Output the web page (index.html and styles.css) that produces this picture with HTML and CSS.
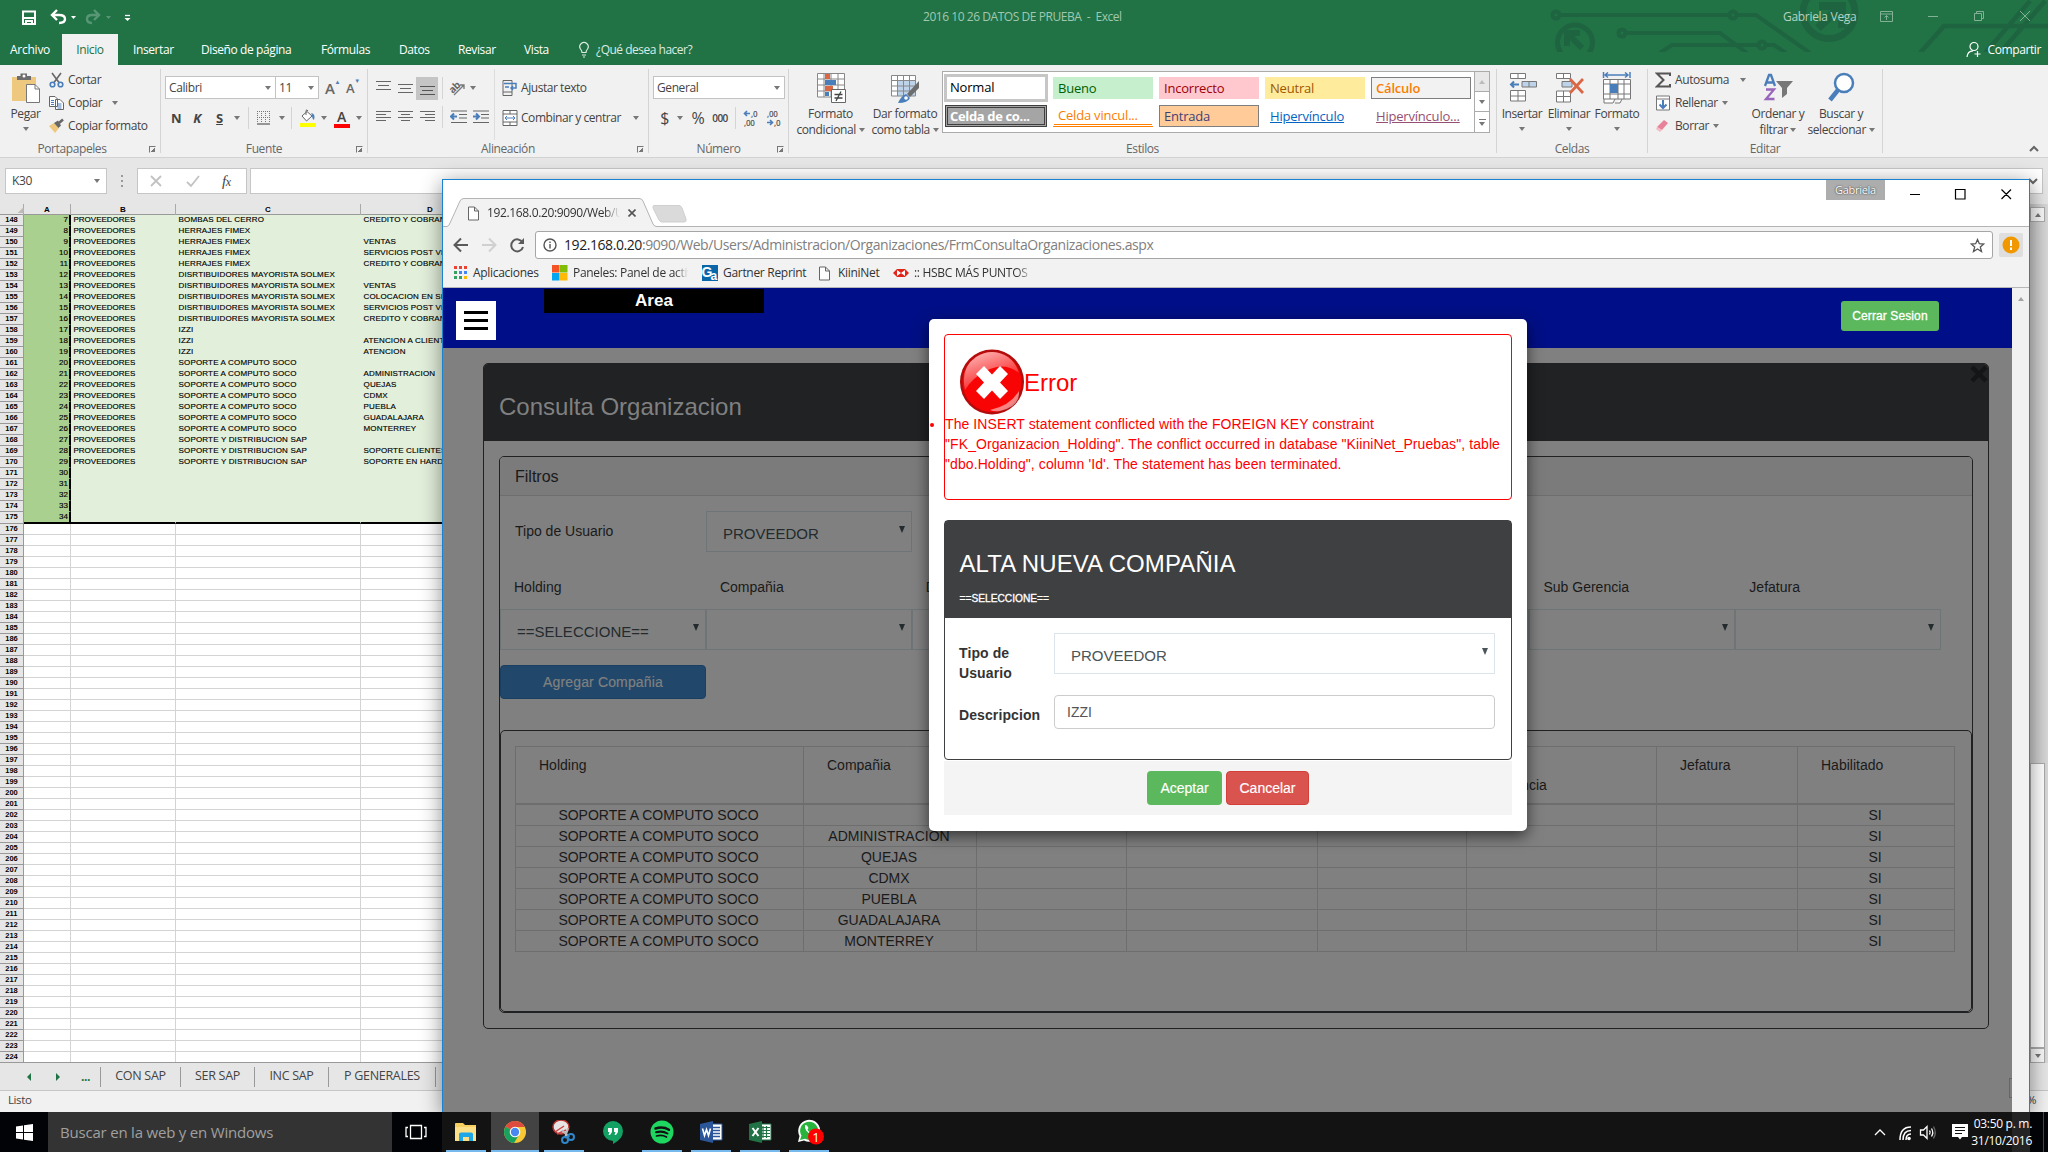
FILE: index.html
```html
<!DOCTYPE html>
<html lang="es">
<head>
<meta charset="utf-8">
<title>Escritorio</title>
<link rel="stylesheet" href="styles.css">
</head>
<body>
<div class="desktop">
<main class="excel">
  <header class="xl-title">
    <svg class="circuit" width="498" height="52" viewBox="1550 0 498 52" fill="none" stroke="#1e6440" stroke-width="4">
      <circle cx="1556" cy="15" r="3.5"/><path d="M1560 15H1729M1738 15H1756L1810 53"/><circle cx="1733" cy="15" r="3.5"/>
      <circle cx="1622" cy="33" r="3.5"/><path d="M1626 33H1720L1747 53M1660 53L1672 45H1758M1767 45H1774L1786 53"/><circle cx="1762" cy="45" r="3.5"/>
      <path d="M1561 53A17.500 17.500 0 1 1 1589 53" stroke-width="5"/><path d="M1567 46V33H1580M1568 34L1582 48" stroke-width="6"/>
      <path d="M1809 -4A26 26 0 1 0 1849 -4" stroke-width="7"/><path d="M1819 6H1842V28M1840 7L1818 28" stroke-width="8"/>
      <path d="M1920 53L1944 26H2048M1985 53L2030 1M2000 53L2045 1" stroke-width="4.500"/>
    </svg>
    <div class="quick">
      <svg width="150" height="32" viewBox="0 0 150 32" fill="none" stroke="#fff" stroke-width="2">
        <path d="M23 10.500H35V23H23ZM24 17H34M26 23V20H32V23"/>
        <path d="M53 14H59Q65 14 65 18Q65 22 59 22M57 9L52 14L57 19" stroke-width="2.400"/>
        <path d="M71 15H76L73.500 18Z" fill="#fff" stroke="none"/>
        <g opacity=".25"><path d="M98 14H92Q87 14 87 18Q87 22 92 22M94 9L99 14L94 19" stroke-width="2.400"/><path d="M106 15H111L108.500 18Z" fill="#fff" stroke="none"/></g>
        <path d="M125 14.500H130" stroke-width="1.300"/><path d="M124.500 17H130.500L127.500 20Z" fill="#fff" stroke="none"/>
      </svg>
    </div>
    <div class="doc-name">2016 10 26 DATOS DE PRUEBA&nbsp; -&nbsp; Excel</div>
    <div class="user">Gabriela Vega</div>
    <svg class="winbtns" width="168" height="32" viewBox="1880 0 168 32" fill="none" stroke="#82b195">
      <path d="M1880.500 10.500H1892.500V20.500H1880.500ZM1881 13H1892M1886.500 19V14.500M1884.500 16.500L1886.500 14.500L1888.500 16.500M1928 15.500H1938M1974.500 12.500H1981.500V19.500H1974.500ZM1976.500 12V10.500H1983.500V17.500H1982M2020 10L2030 20M2030 10L2020 20"/>
    </svg>
  </header>
  <nav class="xl-tabs">
    <span class="tab archivo">Archivo</span><span class="tab active">Inicio</span><span class="tab w-ins">Insertar</span><span class="tab w-dis">Diseño de página</span><span class="tab w-for">Fórmulas</span><span class="tab w-dat">Datos</span><span class="tab w-rev">Revisar</span><span class="tab w-vis">Vista</span>
    <svg width="14" height="18" viewBox="0 0 14 18" fill="none" stroke="#dcebe2" stroke-width="1.200"><path d="M5 11.500Q5 10 3.500 8A4.200 4.200 0 1 1 10.500 8Q9 10 9 11.500ZM5 14H9M6 16H8"/></svg>
    <span class="ask">¿Qué desea hacer?</span>
    <span class="share"><svg width="16" height="18" viewBox="0 0 16 18" fill="none" stroke="#fff" stroke-width="1.200"><circle cx="8" cy="5.500" r="4"/><path d="M1 16Q1.500 10 7 9.800M11.500 10V16M8.500 13H14.500"/></svg>Compartir</span>
  </nav>

  <section class="ribbon">
    <div class="group g-clip">
      <div class="body">
        <div class="big paste">
          <svg width="30" height="32" viewBox="0 0 30 32"><path d="M1 5H25V29H1Z" fill="#edc87e"/><path d="M6 8V4H9.500V1.500H16V4H20V8Z" fill="#6d6d6d"/><circle cx="13" cy="4" r="1.500" fill="#fff"/><path d="M15.500 12.500H24L28.500 17V30.500H15.500Z" fill="#fff" stroke="#777"/><path d="M24 12.500V17H28.500" fill="none" stroke="#777"/></svg>
          <span>Pegar</span><i class="dd"></i>
        </div>
        <div class="stack">
          <div class="cmd"><svg width="15" height="16" viewBox="0 0 15 16" fill="none" stroke-width="1.600"><path d="M3 1L10 10.500M12 1L5 10.500" stroke="#666"/><circle cx="3.500" cy="12.500" r="2.300" stroke="#4a7ebb"/><circle cx="11.500" cy="12.500" r="2.300" stroke="#4a7ebb"/></svg><span>Cortar</span></div>
          <div class="cmd"><svg width="15" height="16" viewBox="0 0 15 16" fill="#fff" stroke="#666"><path d="M.5 1.500H6L8.500 4V11.500H.5ZM6.500 4.500H11L14.500 8V14.500H6.500Z"/><path d="M2 5.500H5M2 7.500H5M2 9.500H5M8.500 9H12.500M8.500 11H12.500M8.500 13H12.500" stroke="#4a7ebb"/></svg><span>Copiar</span><i class="dd"></i></div>
          <div class="cmd"><svg width="15" height="16" viewBox="0 0 15 16"><path d="M0 8L5 5L10 10L6 15Z" fill="#edc87e"/><path d="M5 5L9 2.500L12 7.500L9.500 10Z" fill="#666"/><path d="M10 5L14 1.500" stroke="#666" stroke-width="2.500"/></svg><span>Copiar formato</span></div>
        </div>
      </div>
      <footer><span>Portapapeles</span><i class="launch"></i></footer>
    </div>
    <div class="group g-font">
      <div class="body col">
        <div class="row r-font1"><span class="combo">Calibri<i class="dd"></i></span><span class="combo size">11<i class="dd"></i></span><span class="gl">A<sup>▲</sup></span><span class="gl small">A<sup>▼</sup></span></div>
        <div class="row r-font2"><b>N</b><b><em>K</em></b><b><u>S</u></b><i class="dd"></i><i class="sep"></i>
          <svg width="14" height="14" viewBox="0 0 14 14" fill="none" stroke="#777"><path d="M.5 0V12M4.500 0V12M8.500 0V12M12.500 0V12M0 .5H13M0 6.500H13" stroke-dasharray="1 1"/><path d="M0 13H13" stroke-width="1.500"/></svg><i class="dd"></i><i class="sep"></i>
          <svg width="18" height="18" viewBox="0 0 18 18"><path d="M3 7L8 2.500L13 7L7.500 12Z" fill="#fff" stroke="#666"/><path d="M7 6V1.500Q8 0 9 2" fill="none" stroke="#666"/><path d="M12 4Q17 5 15 11Q13 10 13 6Z" fill="#4a7ebb"/><path d="M1 14H17V18H1Z" fill="#ff0"/></svg><i class="dd"></i>
          <span class="fc">A</span><i class="dd"></i></div>
      </div>
      <footer><span>Fuente</span><i class="launch"></i></footer>
    </div>
    <div class="group g-align">
      <div class="body">
        <div class="col aligns">
          <div class="row r-al">
            <svg width="15" height="14" viewBox="0 0 15 14" stroke="#666"><path d="M0 .5H15M2 4.500H13M0 8.500H15"/></svg>
            <svg width="15" height="14" viewBox="0 0 15 14" stroke="#666"><path d="M0 3.500H15M2 7.500H13M0 11.500H15"/></svg>
            <span class="on"><svg width="15" height="14" viewBox="0 0 15 14" stroke="#555"><path d="M0 5.500H15M2 9.500H13M0 13.500H15"/></svg></span>
            <i class="sep"></i>
            <svg width="18" height="18" viewBox="0 0 18 18"><g transform="rotate(-45 8 8)"><text x="0" y="10" font-size="10" font-weight="bold" fill="#666">ab</text></g><path d="M5 16L15 6M11 6H15V10" fill="none" stroke="#777" stroke-width="1.300"/></svg><i class="dd orient"></i>
          </div>
          <div class="row r-al">
            <svg width="15" height="12" viewBox="0 0 15 12" stroke="#666"><path d="M0 .5H15M0 3.500H10M0 6.500H15M0 9.500H10"/></svg>
            <svg width="15" height="12" viewBox="0 0 15 12" stroke="#666"><path d="M0 .5H15M3 3.500H12M0 6.500H15M3 9.500H12"/></svg>
            <svg width="15" height="12" viewBox="0 0 15 12" stroke="#666"><path d="M0 .5H15M5 3.500H15M0 6.500H15M5 9.500H15"/></svg>
            <i class="sep"></i>
            <svg width="17" height="14" viewBox="0 0 17 14" stroke="#666" fill="none"><path d="M1 1H17M9 4.500H17M9 8H17M1 12.500H17"/><path d="M7 6.500H1M4 3.500L1 6.500L4 9.500" stroke="#4a7ebb" stroke-width="2"/></svg>
            <svg width="17" height="14" viewBox="0 0 17 14" stroke="#666" fill="none"><path d="M1 1H17M9 4.500H17M9 8H17M1 12.500H17"/><path d="M1 6.500H7M4 3.500L7 6.500L4 9.500" stroke="#4a7ebb" stroke-width="2"/></svg>
          </div>
        </div>
        <div class="col wraps">
          <div class="row"><svg width="16" height="16" viewBox="0 0 16 16" fill="none" stroke="#666"><path d="M1 .5H10V15.500H1ZM1 12H10"/><path d="M2 3.500H14V8H9M11 6L9 8L11 10M3 7H7" stroke="#4a7ebb" stroke-width="1.500"/></svg><span>Ajustar texto</span></div>
          <div class="row"><svg width="16" height="16" viewBox="0 0 16 16" fill="#fff" stroke="#666"><path d="M1 .5H15V15.500H1ZM1 4H15M1 12H15M8 .5V4M8 12V15.500"/><path d="M3 8H13M5 6L3 8L5 10M11 6L13 8L11 10" stroke="#4a7ebb" fill="none"/></svg><span>Combinar y centrar</span><i class="dd"></i></div>
        </div>
      </div>
      <footer><span>Alineación</span><i class="launch"></i></footer>
    </div>
    <div class="group g-num">
      <div class="body col">
        <div class="row"><span class="combo">General<i class="dd"></i></span></div>
        <div class="row r-num"><span class="sym">$</span><i class="dd"></i><span class="sym">%</span><span class="zer">000</span><i class="sep"></i>
          <svg class="dec" width="15" height="18" viewBox="0 0 15 18"><path d="M7 4.500H1.500M4 2L1.500 4.500L4 7" fill="none" stroke="#4a7ebb" stroke-width="1.600"/><text x="8" y="8">,0</text><text x="1" y="17">,00</text></svg>
          <svg class="dec" width="15" height="18" viewBox="0 0 15 18"><path d="M1 13.500H6.500M4 11L6.500 13.500L4 16" fill="none" stroke="#4a7ebb" stroke-width="1.600"/><text x="1" y="8">,00</text><text x="8" y="17">,0</text></svg></div>
      </div>
      <footer><span>Número</span><i class="launch"></i></footer>
    </div>
    <div class="group g-style">
      <div class="body">
        <div class="big"><svg width="30" height="32" viewBox="0 0 30 32"><path d="M1.500 1.500H28.500V25H1.500ZM1.500 7H28M1.500 13H28M1.500 19H28M8 1V25M15 1V25M22 1V25" fill="#fff" stroke="#888"/><path d="M9 2H14V7H9ZM9 14H17V19H9Z" fill="#da6644"/><path d="M9 8H20V13H9ZM9 20H13V24H9Z" fill="#4a7ebb"/><path d="M15.500 17.500H29.500V30.500H15.500Z" fill="#fff" stroke="#666"/><path d="M18.500 22.500H26.500M18.500 26H26.500M25 19.500L20 29" stroke="#444" stroke-width="1.300"/></svg><span>Formato</span><span>condicional <i class="dd"></i></span></div>
        <div class="big"><svg width="30" height="32" viewBox="0 0 30 32"><path d="M1.500 3.500H25.500V24H1.500Z" fill="#fff"/><path d="M8 9H25V24H8Z" fill="#bdd3ea"/><path d="M1.500 3.500H25.500V24H1.500ZM1.500 8.500H25M1.500 14H25M1.500 19H25M7.500 3V24M13.500 3V24M19.500 3V24" fill="none" stroke="#888"/><path d="M29 9V16L20 25L17 22Z" fill="#6d6d6d"/><path d="M8 31Q11 24 16 22L20 26Q18 31 8 31Z" fill="#4a7ebb"/><circle cx="16" cy="26" r="1.800" fill="#fff"/></svg><span>Dar formato</span><span>como tabla <i class="dd"></i></span></div>
        <div class="gallery">
          <div class="cells"><span class="s-normal">Normal</span><span class="s-good">Bueno</span><span class="s-bad">Incorrecto</span><span class="s-neutral">Neutral</span><span class="s-calc">Cálculo</span><span class="s-check">Celda de co...</span><span class="s-linked">Celda vincul...</span><span class="s-input">Entrada</span><span class="s-link">Hipervínculo</span><span class="s-vlink">Hipervínculo...</span></div>
          <div class="gscroll"><span><i class="dd up"></i></span><span><i class="dd"></i></span><span><i class="bar"></i><i class="dd"></i></span></div>
        </div>
      </div>
      <footer><span>Estilos</span></footer>
    </div>
    <div class="group g-cell">
      <div class="body">
        <div class="big"><svg width="30" height="32" viewBox="0 0 30 32" fill="#fff" stroke="#777"><path d="M3.500 1.500H18.500V6.500H3.500ZM11 1.500V6.500M3.500 18.500H18.500V29H3.500ZM11 18.500V29M3.500 24H18.500"/><path d="M15 9.500H29.500V15H15ZM22 9.500V15" fill="#bdd3ea"/><path d="M12 12.500H4M7 9.500L4 12.500L7 15.500" stroke="#4a7ebb" stroke-width="2" fill="none"/></svg><span>Insertar</span><i class="dd"></i></div>
        <div class="big"><svg width="30" height="32" viewBox="0 0 30 32" fill="#fff" stroke="#777"><path d="M2.500 1.500H16.500V6.500H2.500ZM9.500 1.500V6.500M2.500 19H16.500V30H2.500ZM9.500 19V30M2.500 24.500H16.500"/><path d="M8 9.500H18V15H8Z" fill="#bdd3ea"/><path d="M16 7L29 21M29 7L16 21" stroke="#da6644" stroke-width="2.800"/></svg><span>Eliminar</span><i class="dd"></i></div>
        <div class="big"><svg width="30" height="32" viewBox="0 0 30 32" fill="#fff" stroke="#777"><path d="M1.500 7.500H28.500V27H1.500ZM1.500 12H28M1.500 22H28M8 7.500V27M16 7.500V27M22 7.500V27M2 27V31H11L13 27M13 31H18L20 27"/><path d="M8 12H16V21H8Z" fill="#4a7ebb" stroke="none"/><path d="M3 3H26M6 .5L3 3L6 5.500M23 .5L26 3L23 5.500M1.500 0V6M28 0V6" stroke="#4a7ebb" stroke-width="1.500" fill="none"/></svg><span>Formato</span><i class="dd"></i></div>
      </div>
      <footer><span>Celdas</span></footer>
    </div>
    <div class="group g-edit">
      <div class="body">
        <div class="stack">
          <div class="cmd"><svg width="16" height="16" viewBox="0 0 16 16" fill="none" stroke="#555" stroke-width="2"><path d="M15 4V1.500H2L8.500 8L2 14.500H15V12"/></svg><span>Autosuma</span><i class="dd"></i></div>
          <div class="cmd"><svg width="16" height="16" viewBox="0 0 16 16" fill="#fff" stroke="#777"><path d="M1.500 1H14.500V15H1.500ZM1.500 4H14.500"/><path d="M8 5V13M4.500 9.500L8 13L11.500 9.500" stroke="#4a7ebb" stroke-width="2" fill="none"/></svg><span>Rellenar</span><i class="dd"></i></div>
          <div class="cmd"><svg width="16" height="16" viewBox="0 0 16 16"><path d="M2 9L9 2L13 5L7 12Z" fill="#e8829a"/><path d="M2 9L7 12L5 14L1 11Z" fill="#f4bac6"/></svg><span>Borrar</span><i class="dd"></i></div>
        </div>
        <div class="big"><svg width="30" height="32" viewBox="0 0 30 32"><path d="M2 14L6 3H8L12 14M4 10.500H10" fill="none" stroke="#4a7ebb" stroke-width="2.300"/><path d="M3 17.500H11L3 27H11.500" fill="none" stroke="#9966bb" stroke-width="2.300"/><path d="M13 9H30L24 16V22L19 26V16Z" fill="#777"/></svg><span>Ordenar y</span><span>filtrar <i class="dd"></i></span></div>
        <div class="big"><svg width="30" height="32" viewBox="0 0 30 32"><circle cx="18" cy="11" r="9" fill="#fff" stroke="#4a7ebb" stroke-width="2.500"/><path d="M12 18L4 28" stroke="#4a7ebb" stroke-width="4.500"/></svg><span>Buscar y</span><span>seleccionar <i class="dd"></i></span></div>
      </div>
      <footer><span>Editar</span></footer>
    </div>
    <svg class="collapse" width="12" height="8" viewBox="0 0 12 8" fill="none" stroke="#666" stroke-width="2"><path d="M2 6L6 2L10 6"/></svg>
  </section>

  <section class="formula">
    <div class="namebox">K30<i class="dd"></i></div>
    <div class="dots"></div>
    <div class="fxbox"><svg width="108" height="24" viewBox="0 0 108 24" fill="none" stroke="#c2c2c2" stroke-width="1.800"><path d="M13 7L23 17M23 7L13 17M49 13L53 17L61 7"/></svg><em>f<small>x</small></em></div>
    <div class="finput"><svg width="10" height="8" viewBox="0 0 10 8" fill="none" stroke="#666" stroke-width="2"><path d="M1 2L5 6L9 2"/></svg></div>
  </section>

  <section class="sheet">
    <div class="grid" id="grid">
      <div class="hrow"><span class="corner">◢</span><span>A</span><span>B</span><span>C</span><span>D</span></div>
    </div>
    <div class="vscroll"><i class="btn"><i class="dd up"></i></i><i class="thumb"></i><i class="btn"><i class="dd"></i></i></div>
  </section>
  <div class="sheettabs"><i class="arr left"></i><i class="arr right"></i><b>...</b><span class="t1">CON SAP</span><span class="t2">SER SAP</span><span class="t3">INC SAP</span><span class="t4">P GENERALES</span></div>
  <div class="status"><span>Listo</span><span>%</span></div>
</main>

<section class="chrome">
  <div class="strip">
    <svg class="tabshape" width="250" height="30" viewBox="443 197 250 30"><path d="M443 226.500H447Q449 226 450 223L460 201Q461 198.500 464 198.500H607Q610 198.500 611 201L621 224Q622 226.500 625 226.500V228H443Z" fill="#f2f2f2"/><path d="M443 226.500H447Q449 226 450 223L460 201Q461 198.500 464 198.500H639Q642 198.500 643 201L653 224Q654 226.500 657 226.500V228H443Z" fill="#f2f2f2"/><path d="M443 226.500H447Q449 226 450 223L460 201Q461 198.500 464 198.500H639Q642 198.500 643 201L653 224Q654 226.500 657 226.500H693" fill="none" stroke="#b4b4b4"/><path d="M654 205.500H679Q681 205.500 682 208L686 219Q687 222 684 222H662Q660 222 659 220L653 208Q652.500 205.500 654 205.500Z" fill="#dadada" stroke="#cfcfcf"/></svg>
    <div class="tabtext"><svg width="11" height="15" viewBox="0 0 11 15" fill="#fff" stroke="#666"><path d="M.5 1H6.500L10.500 5V14H.5ZM6.500 1V5H10.500"/></svg><span>192.168.0.20:9090/Web/U</span><svg width="8" height="8" viewBox="0 0 8 8" stroke="#555" stroke-width="1.600"><path d="M.5 .5L7.500 7.500M7.500 .5L.5 7.500"/></svg></div>
    <span class="profile">Gabriela</span>
    <svg class="cbtns" width="110" height="28" viewBox="1910 180 110 28" fill="none" stroke="#000" stroke-width="1.200"><path d="M1910 194.500H1920M1955.500 189.500H1965V199H1955.500ZM2001.500 189.500L2011 199M2011 189.500L2001.500 199"/></svg>
  </div>
  <div class="toolbar">
    <svg width="80" height="28" viewBox="450 231 80 28" fill="none" stroke="#5a5a5a" stroke-width="2"><path d="M468 245H455M461 238.500L454.500 245L461 251.500"/><path d="M482 245H495M489 238.500L495.500 245L489 251.500" stroke="#d0d0d0"/><path d="M522.500 242.500A6 6 0 1 0 523 247"/><path d="M524 238V244H518Z" fill="#5a5a5a" stroke="none"/></svg>
    <div class="omni"><svg width="14" height="14" viewBox="0 0 14 14" fill="none" stroke="#555" stroke-width="1.400"><circle cx="7" cy="7" r="6"/><path d="M7 6V10.500M7 3.500V5"/></svg><span><b>192.168.0.20</b>:9090/Web/Users/Administracion/Organizaciones/FrmConsultaOrganizaciones.aspx</span><svg class="star" width="15" height="15" viewBox="0 0 15 15" fill="none" stroke="#555" stroke-width="1.300"><path d="M7.500 1.500L9.300 5.700L13.800 6L10.300 9L11.500 13.500L7.500 11L3.500 13.500L4.700 9L1.200 6L5.700 5.700Z"/></svg></div>
    <div class="warn"><svg width="18" height="18" viewBox="0 0 18 18"><circle cx="9" cy="9" r="8.500" fill="#f19700"/><path d="M9 4V10M9 11.500V14" stroke="#fff" stroke-width="2"/></svg></div>
  </div>
  <div class="bookmarks">
    <svg class="apps" width="14" height="14" viewBox="0 0 14 14"><path d="M0 0h3v3H0zM5 0h3v3H5zM10 0h3v3h-3z" fill="#ea4335"/><path d="M0 5h3v3H0zM0 10h3v3H0zM5 10h3v3H5z" fill="#34a160"/><path d="M5 5h3v3H5zM10 5h3v3h-3z" fill="#4285f4"/><path d="M10 10h3v3h-3z" fill="#fbbc05"/></svg><span class="b1">Aplicaciones</span>
    <svg width="16" height="16" viewBox="0 0 16 16"><path d="M0 0h7.500v7.500H0z" fill="#f35325"/><path d="M8 0h7.500v7.500H8z" fill="#81bc06"/><path d="M0 8h7.500v7.500H0z" fill="#05a6f0"/><path d="M8 8h7.500v7.500H8z" fill="#ffba08"/></svg><span class="b2">Paneles: Panel de activ</span>
    <svg width="16" height="16" viewBox="0 0 16 16"><path d="M0 0H16V16H0Z" fill="#0967a9"/><text x="-.5" y="12" font-family="Liberation Sans" font-weight="bold" font-size="14" fill="#fff">G</text><text x="8.500" y="15" font-family="Liberation Sans" font-weight="bold" font-size="12" fill="#fff">a</text></svg><span class="b3">Gartner Reprint</span>
    <svg width="11" height="15" viewBox="0 0 11 15" fill="#fff" stroke="#666"><path d="M.5 1H6.500L10.500 5V14H.5ZM6.500 1V5H10.500"/></svg><span class="b4">KiiniNet</span>
    <svg width="16" height="10" viewBox="0 0 16 10"><path d="M0 5L4 1H12L16 5L12 9H4Z" fill="#e1251b"/><path d="M4 2L8 5L12 2V8L8 5L4 8Z" fill="#fff"/><path d="M6 1L8 3.500L10 1ZM6 9L8 6.500L10 9Z" fill="#e1251b"/></svg><span class="b5">:: HSBC MÁS PUNTOS</span>
  </div>
  <div class="viewport">
    <div class="page">
      <div class="navy"><div class="burger"><i></i><i></i><i></i></div><div class="area">Area</div><span class="logout">Cerrar Sesion</span></div>
      <div class="panel">
        <div class="phead"><span>Consulta Organizacion</span><svg width="18" height="20" viewBox="0 0 18 20" fill="none" stroke="#141516" stroke-width="4.500"><path d="M2 3L16 17M16 3L2 17"/></svg></div>
        <div class="inner">
          <div class="fhead">Filtros</div>
          <div class="filters">
            <div class="frow"><label>Tipo de Usuario</label><span class="sel">PROVEEDOR<i></i></span></div>
            <div class="labels"><label>Holding</label><label>Compañia</label><label>Direccion</label><label>Sub Direccion</label><label>Gerencia</label><label>Sub Gerencia</label><label>Jefatura</label></div>
            <div class="sels"><span class="sel">==SELECCIONE==<i></i></span><span class="sel"><i></i></span><span class="sel"><i></i></span><span class="sel"><i></i></span><span class="sel"><i></i></span><span class="sel"><i></i></span><span class="sel"><i></i></span></div>
            <span class="add">Agregar Compañia</span>
          </div>
          <div class="results"><table><colgroup><col class="c1"><col class="c2"><col class="c3"><col class="c4"><col class="c5"><col class="c6"><col class="c7"><col class="c8"></colgroup>
            <thead><tr><th>Holding</th><th>Compañia</th><th>Direccion</th><th>Sub Direccion</th><th>Gerencia</th><th>Sub<br>Gerencia</th><th>Jefatura</th><th>Habilitado</th></tr></thead>
            <tbody id="orgs"></tbody></table></div>
        </div>
      </div>
      <i class="ghost"></i>
    </div>
    <div class="cscroll"><i class="dd up"></i></div>
  </div>
  <div class="modal">
    <div class="error">
      <div class="etitle"><svg width="64" height="66" viewBox="0 0 64 66"><defs><linearGradient id="gloss" x1="0" y1="0" x2="0.500" y2="1"><stop offset="0" stop-color="#fff" stop-opacity=".95"/><stop offset="1" stop-color="#fff" stop-opacity=".1"/></linearGradient></defs><ellipse cx="32" cy="33" rx="32" ry="32.500" fill="#b30c0c"/><ellipse cx="32" cy="33" rx="29.500" ry="30" fill="#f80404"/><path d="M5 41Q0 19 16 8Q32 -2 48 8Q56 14 59 24Q44 12 26 22Q12 29 5 41Z" fill="url(#gloss)" opacity=".8"/><path d="M30 61Q50 57 59 42Q60 58 40 62Q34 63 30 61Z" fill="#fff" opacity=".5"/><path d="M24 17L32 25.500L40 17L48 25L40 33.500L48 42L40 50L32 41.500L24 50L16 42L24 33.500L16 25Z" fill="#fff"/></svg><span>Error</span></div>
      <ul><li>The INSERT statement conflicted with the FOREIGN KEY constraint<br>"FK_Organizacion_Holding". The conflict occurred in database "KiiniNet_Pruebas", table<br>"dbo.Holding", column 'Id'. The statement has been terminated.</li></ul>
    </div>
    <div class="form">
      <div class="mhead"><h3>ALTA NUEVA COMPAÑIA</h3><small>==SELECCIONE==</small></div>
      <div class="fields"><div class="field f1"><label>Tipo de<br>Usuario</label><span class="msel">PROVEEDOR<i></i></span></div><div class="field f2"><label>Descripcion</label><span class="minput">IZZI</span></div></div>
    </div>
    <div class="mfoot"><span class="ok">Aceptar</span><span class="cancel">Cancelar</span></div>
  </div>
</section>

<footer class="taskbar">
  <div class="start"><svg width="17" height="17" viewBox="0 0 17 17" fill="#fff"><path d="M0 2.500L7 1.500V8H0ZM8 1.300L17 0V8H8ZM0 9H7V15.500L0 14.500ZM8 9H17V17L8 15.700Z"/></svg></div>
  <div class="search">Buscar en la web y en Windows</div>
  <div class="tview"><svg width="22" height="16" viewBox="0 0 22 16" fill="none" stroke="#fff" stroke-width="1.300"><path d="M5.500 1.500H16.500V14.500H5.500ZM3 3.500H1V12.500H3M19 3.500H21V12.500H19"/></svg></div>
  <div class="apps-row">
    <span class="run"><svg width="24" height="24" viewBox="0 0 24 24"><path d="M1 4Q1 3 2 3H9L11 5H22V21H1Z" fill="#f7cf5f"/><path d="M1 7H22V21H1Z" fill="#fce088"/><path d="M5 21V14Q5 12.500 7 12.500H17Q19 12.500 19 14V21H15V17H9V21Z" fill="#1da6e8"/></svg></span>
    <span class="run cur"><svg width="24" height="24" viewBox="0 0 24 24"><circle cx="12" cy="12" r="11" fill="#f7c934"/><path d="M12 12L2.500 6.500A11 11 0 0 0 11 23L16 15Z" fill="#19a15f"/><path d="M12 12L2.500 6.500A11 11 0 0 1 21.700 7H12Z" fill="#dd4b3e"/><circle cx="12" cy="12" r="5.300" fill="#fff"/><circle cx="12" cy="12" r="4.200" fill="#4888ef"/></svg></span>
    <span class="run"><svg width="24" height="24" viewBox="0 0 24 24"><ellipse cx="9" cy="7" rx="8" ry="7" fill="#e9e4e4" stroke="#b9322c" stroke-width="1.500"/><path d="M3 12L12 6M5 14L14 10" stroke="#c44" stroke-width="1.500"/><path d="M10 10L17 17M16 8L13 18" stroke="#bbb" stroke-width="2"/><circle cx="19" cy="17" r="3" fill="none" stroke="#2f86c9" stroke-width="2"/><circle cx="13" cy="20" r="3" fill="none" stroke="#2f86c9" stroke-width="2"/></svg></span>
    <span><svg width="24" height="24" viewBox="0 0 24 24"><path d="M12 1A10 10 0 0 1 22 11Q22 19 12 24V21A10 10 0 0 1 12 1Z" fill="#12a063"/><path d="M7 8H11V12L9 15H7.500L8.500 12H7ZM13 8H17V12L15 15H13.500L14.500 12H13Z" fill="#fff"/></svg></span>
    <span class="run"><svg width="24" height="24" viewBox="0 0 24 24" fill="none" stroke="#111" stroke-linecap="round"><circle cx="12" cy="12" r="11.500" fill="#1ed760" stroke="none"/><path d="M5.500 8.500Q13 6 19 9.800" stroke-width="2.400"/><path d="M6 12.300Q12.500 10.500 17.500 13.500" stroke-width="2"/><path d="M6.500 16Q12 14.500 16.500 17" stroke-width="1.700"/></svg></span>
    <span class="run"><svg width="24" height="24" viewBox="0 0 24 24"><path d="M11 4H23V20H11Z" fill="#fff" stroke="#2b579a"/><path d="M14 7.500H21M14 10.500H21M14 13.500H21M14 16.500H21" stroke="#2b579a" stroke-width="1.300"/><path d="M1 4L14 1V23L1 20Z" fill="#2b579a"/><path d="M3.500 8.500L5.500 15.500L7.500 9.500L9.500 15.500L11.500 8.500" fill="none" stroke="#fff" stroke-width="1.600"/></svg></span>
    <span class="run"><svg width="24" height="24" viewBox="0 0 24 24"><path d="M11 4H23V20H11Z" fill="#fff" stroke="#217346"/><path d="M15 6V18M18.500 6V18M14 7.500H22M14 10.500H22M14 13.500H22M14 16.500H22" stroke="#217346" stroke-width="1.200"/><path d="M1 4L14 1V23L1 20Z" fill="#217346"/><path d="M4.500 8L10.500 16M10.500 8L4.500 16" fill="none" stroke="#fff" stroke-width="2"/></svg></span>
    <span class="run whats"><svg width="28" height="26" viewBox="0 0 28 26"><path d="M1 23L2.500 17A11 11 0 1 1 7 21.500Z" fill="#fff"/><path d="M3 21L4.500 16.500A9 9 0 1 1 8 19.700Z" fill="#26b43c"/><path d="M8 6Q7 12 15 16Q18 15 17 13L14.500 12L13 13.500Q11 12 10.500 10.500L11.500 9L10 6.500Z" fill="#fff"/><circle cx="19" cy="17.500" r="8" fill="#f00"/><text x="19" y="22.500" font-family="Open Sans" font-size="13" text-anchor="middle" fill="#fff">1</text></svg></span>
  </div>
  <div class="tray"><svg width="80" height="24" viewBox="1872 1119 80 24" fill="none" stroke="#fff" stroke-width="1.300"><path d="M1875 1134L1880 1129L1885 1134"/><path d="M1900 1139Q1900 1126 1911 1126M1903 1139Q1903 1129.500 1911 1129.500M1906 1139Q1906 1133 1911 1133" stroke-width="1.500"/><circle cx="1909" cy="1137.500" r="1.800" fill="#fff" stroke="none"/><path d="M1920.500 1129H1923.500L1927 1125.500V1137.500L1923.500 1134H1920.500ZM1929.500 1129.500Q1931 1131.500 1929.500 1133.500M1931.500 1127.500Q1934 1131.500 1931.500 1135.500"/><path d="M1933.500 1125.500Q1937 1131.500 1933.500 1137.500" stroke="#666"/></svg>
    <svg class="note" width="18" height="18" viewBox="0 0 18 18"><path d="M1 1H17V14H11L9 16.500L7 14H1Z" fill="#fff"/><path d="M4 4.500H14M4 7.500H14M4 10.500H11" stroke="#111"/></svg></div>
  <div class="edge"></div>
  <div class="clock">03:50 p. m.<br>31/10/2016</div>
  <div class="peek"></div>
</footer>
</div>
<script src="script.js"></script>
</body>
</html>
```

FILE: script.js
```js
const H = 'HERRAJES FIMEX', M = 'DISRTIBUIDORES MAYORISTA SOLMEX', S = 'SOPORTE A COMPUTO SOCO', D = 'SOPORTE Y DISTRIBUCION SAP';
const data = [
  ['BOMBAS DEL CERRO', 'CREDITO Y COBRANZA'], [H, ''], [H, 'VENTAS'], [H, 'SERVICIOS POST VENTA'], [H, 'CREDITO Y COBRANZA'],
  [M, ''], [M, 'VENTAS'], [M, 'COLOCACION EN SITIO'], [M, 'SERVICIOS POST VENTA'], [M, 'CREDITO Y COBRANZA'],
  ['IZZI', ''], ['IZZI', 'ATENCION A CLIENTES'], ['IZZI', 'ATENCION'],
  [S, ''], [S, 'ADMINISTRACION'], [S, 'QUEJAS'], [S, 'CDMX'], [S, 'PUEBLA'], [S, 'GUADALAJARA'], [S, 'MONTERREY'],
  [D, ''], [D, 'SOPORTE CLIENTES'], [D, 'SOPORTE EN HARDWARE']
];
let rows = '';
for (let n = 148; n <= 224; n++) {
  const d = data[n - 148];
  const cls = n > 175 ? 'blank' : n === 175 ? 'filled last' : 'filled';
  rows += `<div class="grow ${cls}"><b>${n}</b><span class="a">${n <= 175 ? n - 141 : ''}</span><span>${d ? 'PROVEEDORES' : ''}</span><span class="w">${d ? d[0] : ''}</span><span class="w">${d ? d[1] : ''}</span></div>`;
}
document.getElementById('grid').insertAdjacentHTML('beforeend', rows);

document.getElementById('orgs').innerHTML = ['', 'ADMINISTRACION', 'QUEJAS', 'CDMX', 'PUEBLA', 'GUADALAJARA', 'MONTERREY']
  .map(c => `<tr><td>${S}</td><td>${c}</td><td></td><td></td><td></td><td></td><td></td><td>SI</td></tr>`).join('');
```

FILE: styles.css
```css
* { box-sizing: border-box; }
body { margin: 0; width: 2048px; height: 1152px; overflow: hidden; font: 12px/16px "Open Sans", "Noto Sans", sans-serif; }
svg { display: block; flex: none; }
i { font-style: normal; }
.desktop { position: relative; width: 2048px; height: 1152px; overflow: hidden; display: flex; flex-direction: column; }
.excel { flex: none; height: 1112px; display: flex; flex-direction: column; background: #e6e6e6; letter-spacing: -.4px; color: #444; white-space: nowrap; }
.dd { display: inline-block; width: 0; height: 0; border: 3px solid transparent; border-top: 4px solid #777; border-bottom: 0; flex: none; vertical-align: 2px; }
.dd.up { border-top: 0; border-bottom: 4px solid #777; }

/* title bar and tabs */
.xl-title { position: relative; flex: none; height: 34px; background: #217346; display: flex; align-items: center; color: #a3c9b1; }
.circuit { position: absolute; left: 1550px; top: 0; z-index: 1; }
.quick { width: 923px; }
.doc-name { width: 860px; color: #a0c8b0; letter-spacing: -.45px; }
.user { width: 97px; position: relative; z-index: 2; letter-spacing: -.3px; color: #b5d3c1; }
.winbtns { position: relative; z-index: 2; }
.xl-tabs { flex: none; height: 31px; background: #217346; display: flex; align-items: center; color: #fff; }
.archivo { width: 62px; padding-left: 10px; letter-spacing: -.25px; }
.tab.active { width: 56px; height: 31px; line-height: 31px; background: #f1f1f1; color: #217346; text-align: center; }
.w-ins { width: 83px; padding-left: 15px; }
.w-dis { width: 120px; }
.w-for { width: 78px; }
.w-dat { width: 59px; }
.w-rev { width: 66px; }
.w-vis { width: 53px; }
.ask { padding-left: 5px; color: #dcebe2; letter-spacing: -.5px; }
.share { position: relative; z-index: 2; margin-left: auto; display: flex; align-items: center; gap: 6px; padding-right: 7px; }

/* ribbon */
.ribbon { flex: none; height: 93px; background: #f1f1f1; border-bottom: 1px solid #d2d2d2; display: flex; padding-top: 4px; }
.group { display: flex; flex-direction: column; height: 84px; border-right: 1px solid #d4d4d4; }
.group .body { flex: none; height: 71px; display: flex; }
.group .body.col, .col { display: flex; flex-direction: column; }
.group footer { display: flex; flex: none; height: 18px; line-height: 18px; color: #666; }
.group footer span { flex: 1; text-align: center; }
.launch { width: 7px; height: 7px; margin: 6px 4px 0 -11px; border: 1px solid #777; border-right-color: transparent; border-bottom-color: transparent; background: linear-gradient(135deg, transparent 55%, #777 55%); }
.g-clip { width: 161px; } .g-font { width: 207px; } .g-align { width: 281px; } .g-num { width: 140px; } .g-style { width: 708px; } .g-cell { width: 151px; } .g-edit { width: 235px; }
.g-clip footer { padding-right: 16px; }
.g-clip .launch { margin-right: -12px; margin-left: 5px; }
.big { display: flex; flex-direction: column; align-items: center; line-height: 16px; padding-top: 3px; }
.big svg { margin-bottom: 2px; }
.big > .dd { margin-top: 5px; }
.paste { width: 51px; flex: none; }
.stack { display: flex; flex-direction: column; }
.cmd { display: flex; align-items: center; height: 23px; gap: 4px; }
.g-clip .cmd { margin-left: -2px; }
.cmd:first-child { height: 22px; }
.cmd .dd { margin-left: 6px; }
.row { display: flex; align-items: center; height: 31px; flex: none; }
.combo { display: flex; flex: none; align-items: center; justify-content: space-between; width: 111px; height: 23px; border: 1px solid #c3c3c3; background: #fff; padding: 0 4px 0 3px; }
.combo.size { width: 44px; margin-left: -1px; margin-right: 6px; }
.g-font .body, .g-num .body { padding: 4px 0 0 4px; }
.g-font .row:first-child, .g-num .row:first-child { height: 26px; align-items: flex-start; padding-top: 3px; }
.g-num .combo { width: 132px; }
.gl { font-size: 15px; line-height: 24px; width: 23px; font-weight: 600; color: #666; }
.gl.small { font-size: 13px; }
.gl sup { font-size: 6px; line-height: 0; vertical-align: 10px; color: #4a7ebb; }
.r-font2 { display: grid; grid-template-columns: 18px 24px 21px 14px 8px 23px 13px 7px 25px 8px 27px 8px; justify-items: center; margin: 6px 0 0 2px; font-size: 13px; height: 26px; align-items: center; }
.sep { width: 1px; height: 22px; background: #d4d4d4; }
.fc { font-size: 14px; line-height: 15px; font-weight: 600; width: 16px; text-align: center; border-bottom: 4px solid #f00; }
.r-al { display: grid; grid-template-columns: 22px 22px 22px 9px 22px 22px; justify-items: center; }
.orient { margin-left: -14px; }
.aligns { padding-left: 4px; width: 127px; border-right: 1px solid #ddd; }
.aligns .row:first-child { height: 34px; padding-top: 4px; }
.aligns .row:last-child { height: 28px; }
.wraps { padding-left: 7px; }
.on { width: 22px; height: 23px; background: #c5c5c5; display: grid; place-items: center; }
.wraps .row { gap: 3px; letter-spacing: -.45px; }
.wraps .dd { margin-left: 9px; }
.wraps .row:first-child { height: 34px; padding-top: 4px; }
.wraps .row:last-child { height: 30px; }
.r-num { display: grid; grid-template-columns: 15px 16px 20px 24px 7px 23px 22px; justify-items: center; height: 26px; margin: 6px 0 0 4px; }
.sym { font-size: 16px; }
.zer { font-size: 10px; letter-spacing: -.5px; font-weight: 600; }
.dec text { font: 600 8px "Open Sans", sans-serif; fill: #555; letter-spacing: -.2px; }
.g-style .big { width: 75px; margin-left: 4px; }
.g-style .big + .big { width: 74px; margin-left: 0; }
.gallery { margin-top: 2px; width: 548px; height: 62px; border: 1px solid #ababab; background: #fff; display: flex; }
.cells { flex: 1; display: grid; grid-template-columns: 103px repeat(4, 100px); column-gap: 6px; grid-template-rows: 28px 22px; row-gap: 3px; padding: 2px 0 0 1px; font-size: 13px; line-height: 20px; letter-spacing: -.2px; align-items: center; }
.cells span { height: 22px; padding: 0 4px; border: 1px solid transparent; }
.cells .s-normal { height: 28px; border: 3px solid #c6c6c6; color: #000; padding-left: 3px; margin-right: -1px; }
.s-good { background: #c6efce; color: #006100; } .s-bad { background: #ffc7ce; color: #9c0006; } .s-neutral { background: #ffeb9c; color: #9c5700; }
.cells .s-calc { background: #f2f2f2; border-color: #7f7f7f; color: #fa7d00; font-weight: 600; }
.cells .s-check { background: #a5a5a5; border: 3px double #3f3f3f; color: #fff; font-weight: 700; line-height: 16px; padding-left: 2px; margin-left: 1px; letter-spacing: -.35px; }
.cells .s-linked { color: #fa7d00; border-bottom: 3px double #ff8001; line-height: 18px; }
.cells .s-input { background: #ffcc99; color: #3f3f76; border-color: #7f7f7f; }
.s-link { color: #0563c1; text-decoration: underline; } .s-vlink { color: #954f72; text-decoration: underline; }
.gscroll { width: 15px; border-left: 1px solid #ababab; display: grid; grid-template-rows: 20px 20px 20px; background: #fff; }
.gscroll span { border-bottom: 1px solid #ababab; display: flex; flex-direction: column; align-items: center; justify-content: center; gap: 2px; }
.gscroll span:first-child { background: #e8e8e8; }
.gscroll span:last-child { border-bottom: 0; }
.gscroll .up { opacity: .4; }
.bar { width: 7px; height: 1px; background: #777; }
.g-cell .big { width: 48px; } .g-cell .big:first-child { margin-left: 1px; } .g-cell .big:nth-child(2) { width: 46px; } .g-cell .big:nth-child(3) { width: 50px; }
.g-edit .stack { width: 98px; padding-left: 7px; }
.g-edit .big:nth-child(2) { width: 70px; margin-left: -3px; } .g-edit .big:nth-child(3) { width: 56px; }
.g-edit .cmd .dd { margin-left: 0; } .g-edit .cmd:first-child .dd { margin-left: 7px; }
.collapse { margin: 76px 0 0 145px; }

/* formula bar */
.formula { flex: none; height: 46px; display: flex; padding-top: 10px; }
.namebox, .fxbox, .finput { height: 26px; border: 1px solid #c6c6c6; background: #fff; display: flex; align-items: center; }
.namebox { margin-left: 5px; width: 102px; padding: 0 6px; justify-content: space-between; }
.dots { width: 30px; height: 26px; background: radial-gradient(circle 1px at 15px 3px, #999 99%, transparent) 0 5px / 30px 5px repeat-y; background-clip: content-box; padding: 5px 0; }
.fxbox { width: 110px; }
.fxbox em { font: italic 15px "Liberation Serif", serif; margin-left: -24px; color: #444; }
.fxbox small { font-size: 12px; }
.finput { flex: 1; margin: 0 5px 0 3px; justify-content: flex-end; padding-right: 4px; }

/* worksheet */
.sheet { flex: none; height: 859px; display: flex; justify-content: space-between; }
.grid { width: 442px; overflow: hidden; font: 8px/11px "Liberation Sans", sans-serif; color: #000; letter-spacing: 0; border-bottom: 1px solid #999; }
.hrow, .grow { display: grid; grid-template-columns: 24px 47px 105px 185px 139px; height: 11px; }
.hrow { text-align: center; background: #e6e6e6; border-bottom: 1px solid #999; font-weight: bold; font-size: 8px; }
.hrow span { border-right: 1px solid #aaa; }
.hrow .corner { color: #bbb; text-align: right; font-size: 7px; }
.grow > * { border-right: 1px solid #d4d4d4; border-bottom: 1px solid #d4d4d4; padding: 0 2.500px; overflow: hidden; background: #fff; -webkit-text-stroke: .15px #000; }
.grow > .w { letter-spacing: .17px; }
.grow > b { font-size: 7.500px; background: #e6e6e6; border-color: #999; text-align: center; padding: 0; -webkit-text-stroke: 0; line-height: 10px; }
.grow.filled > span { background: #e2efda; border-color: #e2efda; line-height: 10px; }
.grow.filled > .a { background: #a9d08e; border-bottom-color: #a9d08e; border-right: 2px solid #000; text-align: right; padding-right: 1px; }
.grow.last { height: 12px; }
.grow.last > span { border-bottom: 2px solid #000 !important; }
.vscroll { width: 18px; padding: 3px 3px 0 0; display: flex; flex-direction: column; background: linear-gradient(90deg, #c8c8c8, #d9d9d9); }
.btn { height: 15px; border: 1px solid #ababab; background: #f8f8f8; display: grid; place-items: center; }
.thumb { margin-top: 541px; height: 285px; background: #fff; border: 1px solid #ababab; }
.sheettabs { flex: none; height: 28px; background: #e6e6e6; border-bottom: 1px solid #c6c6c6; display: flex; align-items: center; }
.arr { border: 4px solid transparent; }
.arr.left { border-right-color: #217346; border-left: 0; margin-left: 27px; }
.arr.right { border-left-color: #217346; border-right: 0; margin-left: 25px; }
.sheettabs b { color: #217346; margin-left: 21px; width: 19px; flex: none; }
.sheettabs span { border-left: 1px solid #999; height: 20px; line-height: 18px; text-align: center; font-size: 12.500px; letter-spacing: -.3px; }
.t1 { width: 80px; } .t2 { width: 74px; } .t3 { width: 74px; } .t4 { width: 108px; border-right: 1px solid #999; }
.status { flex: none; height: 21px; background: #f1f1f1; display: flex; justify-content: space-between; padding: 1px 12px 0 8px; font-size: 11.500px; }

/* browser window */
.chrome { position: absolute; left: 442px; top: 179px; width: 1588px; height: 934px; border: 1px solid #1a83cf; background: #fff; box-shadow: 0 4px 20px rgba(0,0,0,.45); display: flex; flex-direction: column; letter-spacing: -.3px; white-space: nowrap; }
.strip { flex: none; height: 47px; display: flex; background: linear-gradient(#b4b4b4, #b4b4b4) 0 100% / 100% 1px no-repeat; position: relative; }
.tabshape { margin-top: 17px; }
.tabtext { position: absolute; left: 25px; top: 25px; display: flex; align-items: center; gap: 8px; color: #333; }
.tabtext span { width: 133px; overflow: hidden; letter-spacing: -.35px; -webkit-mask: linear-gradient(90deg, #000 88%, transparent); }
.profile { margin-left: auto; width: 59px; height: 20px; background: #adadad; color: #fff; text-align: center; line-height: 19px; font-size: 11px; text-shadow: 0 0 2px #444, 0 0 1px #555; }
.cbtns { margin-left: 25px; margin-right: 9px; }
.toolbar { flex: none; height: 33px; background: #f2f2f2; display: flex; padding: 4px 6px 0 7px; }
.omni { flex: 1; margin-left: 5px; height: 28px; border: 1px solid #a6a6a6; border-radius: 3px; background: #fff; display: flex; align-items: center; padding: 0 7px 0 7px; font-size: 14px; color: #808080; letter-spacing: -.43px; gap: 7px; }
.omni b { font-weight: 400; color: #222; }
.omni .star { margin-left: auto; }
.warn { width: 24px; height: 24px; margin: 2px 0 0 6px; background: #dedede; border-radius: 2px; display: grid; place-items: center; }
.bookmarks { flex: none; height: 28px; background: #f2f2f2; border-bottom: 1px solid #b6b6b6; display: flex; align-items: center; padding: 0 0 1px 11px; color: #333; }
.bookmarks span { overflow: hidden; padding-left: 5px; flex: none; }
.b1 { width: 84px; } .b2 { width: 134px; -webkit-mask: linear-gradient(90deg, #000 80%, transparent 90%); } .b3 { width: 101px; } .b4 { width: 63px; padding-left: 8px !important; } .b5 { width: 126px; -webkit-mask: linear-gradient(90deg, #000 85%, transparent); }
.viewport { flex: 1; display: flex; min-height: 0; font: 14px/20px "Liberation Sans", Arial, sans-serif; letter-spacing: 0; }
.page { width: 1569px; background: #808080; color: #1a1a1a; position: relative; }
.cscroll { flex: 1; background: #f1f1f1; padding-top: 6px; text-align: center; line-height: 8px; }
.cscroll .up { border-bottom-color: #a3a3a3; }
.ghost { position: absolute; right: 0; bottom: 14px; width: 3px; height: 20px; border: 1px solid #666; border-right: 0; }
.navy { height: 60px; background: #000f87; display: flex; padding-top: 1px; align-items: flex-start; }
.burger { width: 40px; height: 39px; margin: 12px 0 0 13px; background: #fff; display: flex; flex-direction: column; justify-content: center; align-items: center; gap: 5px; }
.burger i { width: 24px; height: 3px; background: #000; }
.area { margin-left: 48px; width: 220px; height: 24px; background: #000; color: #fff; font-weight: bold; font-size: 17px; line-height: 23px; text-align: center; }
.logout { margin: 12px 73px 0 auto; width: 98px; height: 30px; border-radius: 3px; background: #5cb85c; color: #fff; text-align: center; font-size: 12px; line-height: 30px; -webkit-text-stroke: .3px #fff; letter-spacing: .1px; }
.panel { margin: 15px 23px 0 40px; height: 666px; border: 1px solid #202122; border-radius: 5px; }
.phead { height: 77px; background: #202224; color: #808080; font-size: 24px; display: flex; justify-content: space-between; border-radius: 4px 4px 0 0; padding-left: 15px; line-height: 85px; }
.phead svg { margin-top: 0; }
.inner { margin: 15px 15px 0; height: 557px; border: 1px solid #202122; border-radius: 5px; display: flex; flex-direction: column; }
.fhead { height: 39px; background: #7b7b7b; border-bottom: 1px solid #6e6e6e; padding-left: 15px; font-size: 16px; line-height: 40px; border-radius: 4px 4px 0 0; }
.filters { height: 234px; flex: none; display: flex; flex-direction: column; padding-top: 15px; align-items: flex-start; }
.frow { display: flex; align-items: center; }
.frow label { width: 206px; padding: 0 0 2px 15px; }
.sel { display: flex; align-items: center; justify-content: space-between; width: 205.900px; height: 41px; border: 1px solid #6d7576; padding: 4px 6px 0 16px; font-size: 15px; color: #232b2e; }
.sel i, .msel i { border: 3px solid transparent; border-top: 7px solid #232b2e; border-bottom: 0; margin: -8px 0 0 auto; }
.labels { display: flex; margin-top: 25px; height: 32px; }
.labels label { width: 205.900px; padding-left: 14px; }
.sels { display: flex; }
.add { margin-top: 15px; width: 206px; height: 34px; border-radius: 4px; background: #21476a; border: 1px solid #1b3f63; color: #808080; text-align: center; line-height: 32px; letter-spacing: .15px; -webkit-text-stroke: .2px #808080; }
.results { flex: 1; border: 1px solid #202122; border-radius: 5px; padding: 15px 0 0 14px; }
table { border-collapse: collapse; table-layout: fixed; width: 1440px; }
.c1 { width: 288px; } .c2 { width: 173px; } .c3 { width: 150px; } .c4 { width: 191px; } .c5 { width: 149px; } .c6 { width: 190px; } .c7 { width: 141px; } .c8 { width: 157px; }
th { border: 1px solid #6e6e6e; border-bottom-width: 2px; height: 57px; font-weight: 400; text-align: left; vertical-align: top; padding: 8px 23px 0; }
td { border: 1px solid #6e6e6e; height: 21px; padding: 0 2px 0 0; text-align: center; line-height: 20px; }

/* modal dialog */
.modal { position: absolute; left: 486px; top: 139px; width: 598px; height: 512px; background: #fff; border-radius: 5px; box-shadow: 0 5px 15px rgba(0,0,0,.6); padding: 15px 15px; font: 14px/20px "Liberation Sans", Arial, sans-serif; letter-spacing: 0; display: flex; flex-direction: column; }
.error { height: 166px; flex: none; border: 1px solid #f00; border-radius: 4px; color: #f00; padding-top: 14px; }
.etitle { display: flex; align-items: center; font-size: 24px; padding-left: 15px; height: 65px; }
.etitle span { padding-top: 2px; }
.error ul { margin: 0; padding: 0; letter-spacing: .09px; }
.form { margin-top: 20px; height: 240px; flex: none; border: 1px solid #3e3f41; border-radius: 4px; }
.mhead { height: 97px; background: #3f4042; color: #fff; padding: 29px 0 0 14.500px; }
.mhead h3 { margin: 0; font-size: 24px; line-height: 28px; font-weight: 400; letter-spacing: .1px; }
.mhead small { display: block; margin-top: 11px; font-size: 10.200px; -webkit-text-stroke: .3px #fff; }
.fields { padding: 15px 16px 0 14px; }
.field { display: flex; }
.field label { width: 95px; font-weight: bold; color: #333; letter-spacing: .1px; }
.f1 label { padding-top: 10px; }
.f2 { margin-top: 21px; margin-top: 12px; } .f2 label { padding-top: 10px; }
.f1 { height: 50px; }
.msel { flex: 1; height: 41px; border: 1px solid #dce4ec; display: flex; align-items: center; justify-content: space-between; padding: 4px 6px 0 16px; font-size: 15px; color: #4a5459; }
.msel i { border-top-color: #4a5459; }
.minput { flex: 1; height: 34px; border: 1px solid #ccc; border-radius: 4px; padding: 6px 12px; color: #555; }
.mfoot { margin-top: 1px; height: 54px; background: #f4f4f4; display: flex; justify-content: center; gap: 4px; padding-top: 10px; }
.ok, .cancel { height: 34px; border-radius: 4px; color: #fff; text-align: center; line-height: 34px; -webkit-text-stroke: .15px #fff; }
.ok { width: 75px; background: #5cb85c; } .cancel { width: 83px; background: #d9534f; border: 1px solid #d43f3a; line-height: 32px; }

/* taskbar */
.taskbar { position: relative; flex: none; height: 40px; background: #020306; display: flex; color: #fff; z-index: 3; }
.start { width: 48px; display: grid; place-items: center; }
.search { width: 344px; background: #333; color: #a0a0a0; font-size: 15px; line-height: 40px; padding-left: 12px; letter-spacing: -.2px; }
.tview { width: 50px; display: grid; place-items: center; padding-right: 2px; }
.apps-row { width: 1418px; background: #131313; display: flex; gap: 9px; padding-left: 4px; }
.apps-row span { width: 40px; display: grid; place-items: center; }
.apps-row .run { border-bottom: 2px solid #76b9ed; padding-top: 2px; }
.apps-row .whats { padding-left: 3px; }
.apps-row .cur { width: 48px; background: #434343; margin: 0 -4px; }
.tray { width: 152px; background: #131313; display: flex; align-items: center; padding-left: 12px; }
.note { margin-left: -1px; }
.edge { width: 18px; background: #242424; }
.clock { margin-left: -64px; width: 66px; text-align: right; line-height: 17px; padding-top: 3px; letter-spacing: -.3px; white-space: nowrap; }
.peek { margin-left: 11px; width: 5px; border-left: 1px solid #444; }
```
